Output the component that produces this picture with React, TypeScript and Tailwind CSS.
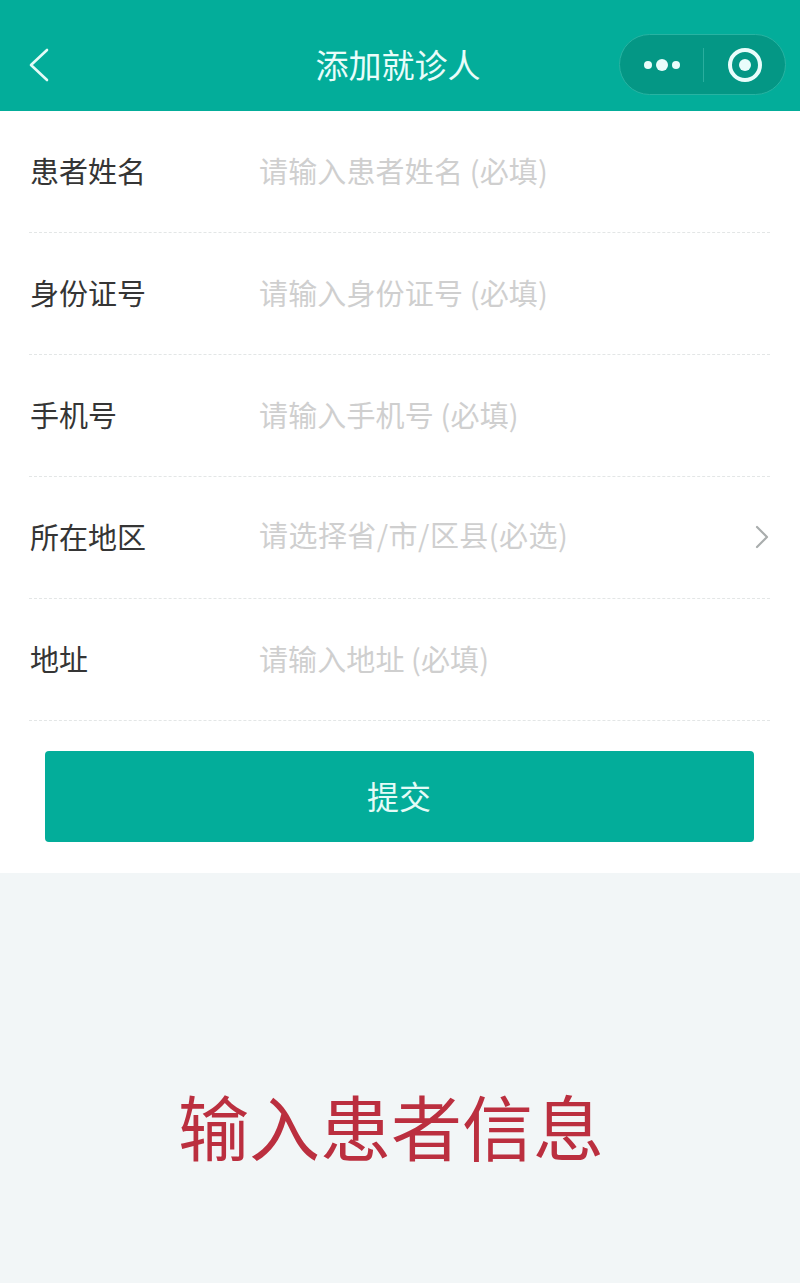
const font = { fontFamily: '"Noto Sans CJK SC", sans-serif' };

const rows = [
  { label: "患者姓名", placeholder: "请输入患者姓名 (必填)", cls: "tracking-[0.15px]" },
  { label: "身份证号", placeholder: "请输入身份证号 (必填)", cls: "tracking-[0.15px]" },
  { label: "手机号", placeholder: "请输入手机号 (必填)", cls: "tracking-[0.15px]" },
  { label: "所在地区", placeholder: "请选择省/市/区县(必选)", cls: "tracking-[0.45px] pb-[4px]", arrow: true },
  { label: "地址", placeholder: "请输入地址 (必填)", cls: "tracking-[0.1px]" },
];

export default function App() {
  return (
    <div className="w-[800px] h-[1283px] bg-[#f2f6f7] overflow-hidden flex flex-col font-['Noto_Sans_CJK_SC',sans-serif]">
      <header className="relative h-[111px] shrink-0 bg-[#03ad9a] flex items-center justify-center pt-[18px] pr-[4px]">
        <svg className="absolute left-[27px] top-[47px]" width="24" height="36" viewBox="0 0 24 36" fill="none">
          <path d="M20 3 L4 18 L20 33" stroke="#e4fbf7" strokeWidth="2.6" strokeLinecap="round" strokeLinejoin="round" />
        </svg>
        <span className="text-[33px] leading-[40px] text-[#e9fdfa] pb-[1px]">添加就诊人</span>
        <div className="absolute left-[619px] top-[34px] w-[167px] h-[61px] rounded-full bg-[#049785] border border-[#28b3a2] flex items-center">
          <div className="w-[83px] h-full flex items-center justify-center gap-[4px]">
            <span className="w-[8px] h-[8px] rounded-full bg-[#e9fdfb]" />
            <span className="w-[12px] h-[12px] rounded-full bg-[#e9fdfb]" />
            <span className="w-[8px] h-[8px] rounded-full bg-[#e9fdfb]" />
          </div>
          <span className="w-px h-[34px] bg-[#2aae9e]" />
          <div className="flex-1 h-full flex items-center justify-center">
            <span className="w-[34px] h-[34px] rounded-full border-[4px] border-[#e9fdfb] flex items-center justify-center">
              <span className="w-[12px] h-[12px] rounded-full bg-[#e9fdfb]" />
            </span>
          </div>
        </div>
      </header>

      <main className="bg-white h-[762px] shrink-0 flex flex-col">
        <div className="ml-[29px] mr-[30px] flex flex-col">
          {rows.map((r) => (
            <div
              key={r.label}
              className="h-[122px] border-b border-dashed border-[#e3e6e6] flex items-center pb-[3px]"
            >
              <span className="w-[230px] pl-[1px] text-[29px] leading-[36px] text-[#353535]">{r.label}</span>
              <span className={`flex-1 text-[29px] leading-[36px] text-[#cfcfcf] ${r.cls}`}>{r.placeholder}</span>
              {r.arrow && (
                <svg className="mr-[1px] mt-[1px]" width="14" height="24" viewBox="0 0 14 24" fill="none">
                  <path d="M2 2 L12 12 L2 22" stroke="#a9adad" strokeWidth="2.2" strokeLinecap="round" strokeLinejoin="round" />
                </svg>
              )}
            </div>
          ))}
        </div>
        <div className="ml-[45px] mr-[46px] mt-[30px] h-[91px] rounded-[4px] bg-[#03ad9a] flex items-center justify-center pb-[3px] pr-[1px]">
          <span className="text-[32px] leading-[40px] text-[#e4fbf7]">提交</span>
        </div>
      </main>

      <div className="flex-1 flex justify-center pt-[206px] pr-[18px]">
        <span className="text-[71px] leading-[90px] text-[#bb2f3f]" style={font}>输入患者信息</span>
      </div>
    </div>
  );
}
